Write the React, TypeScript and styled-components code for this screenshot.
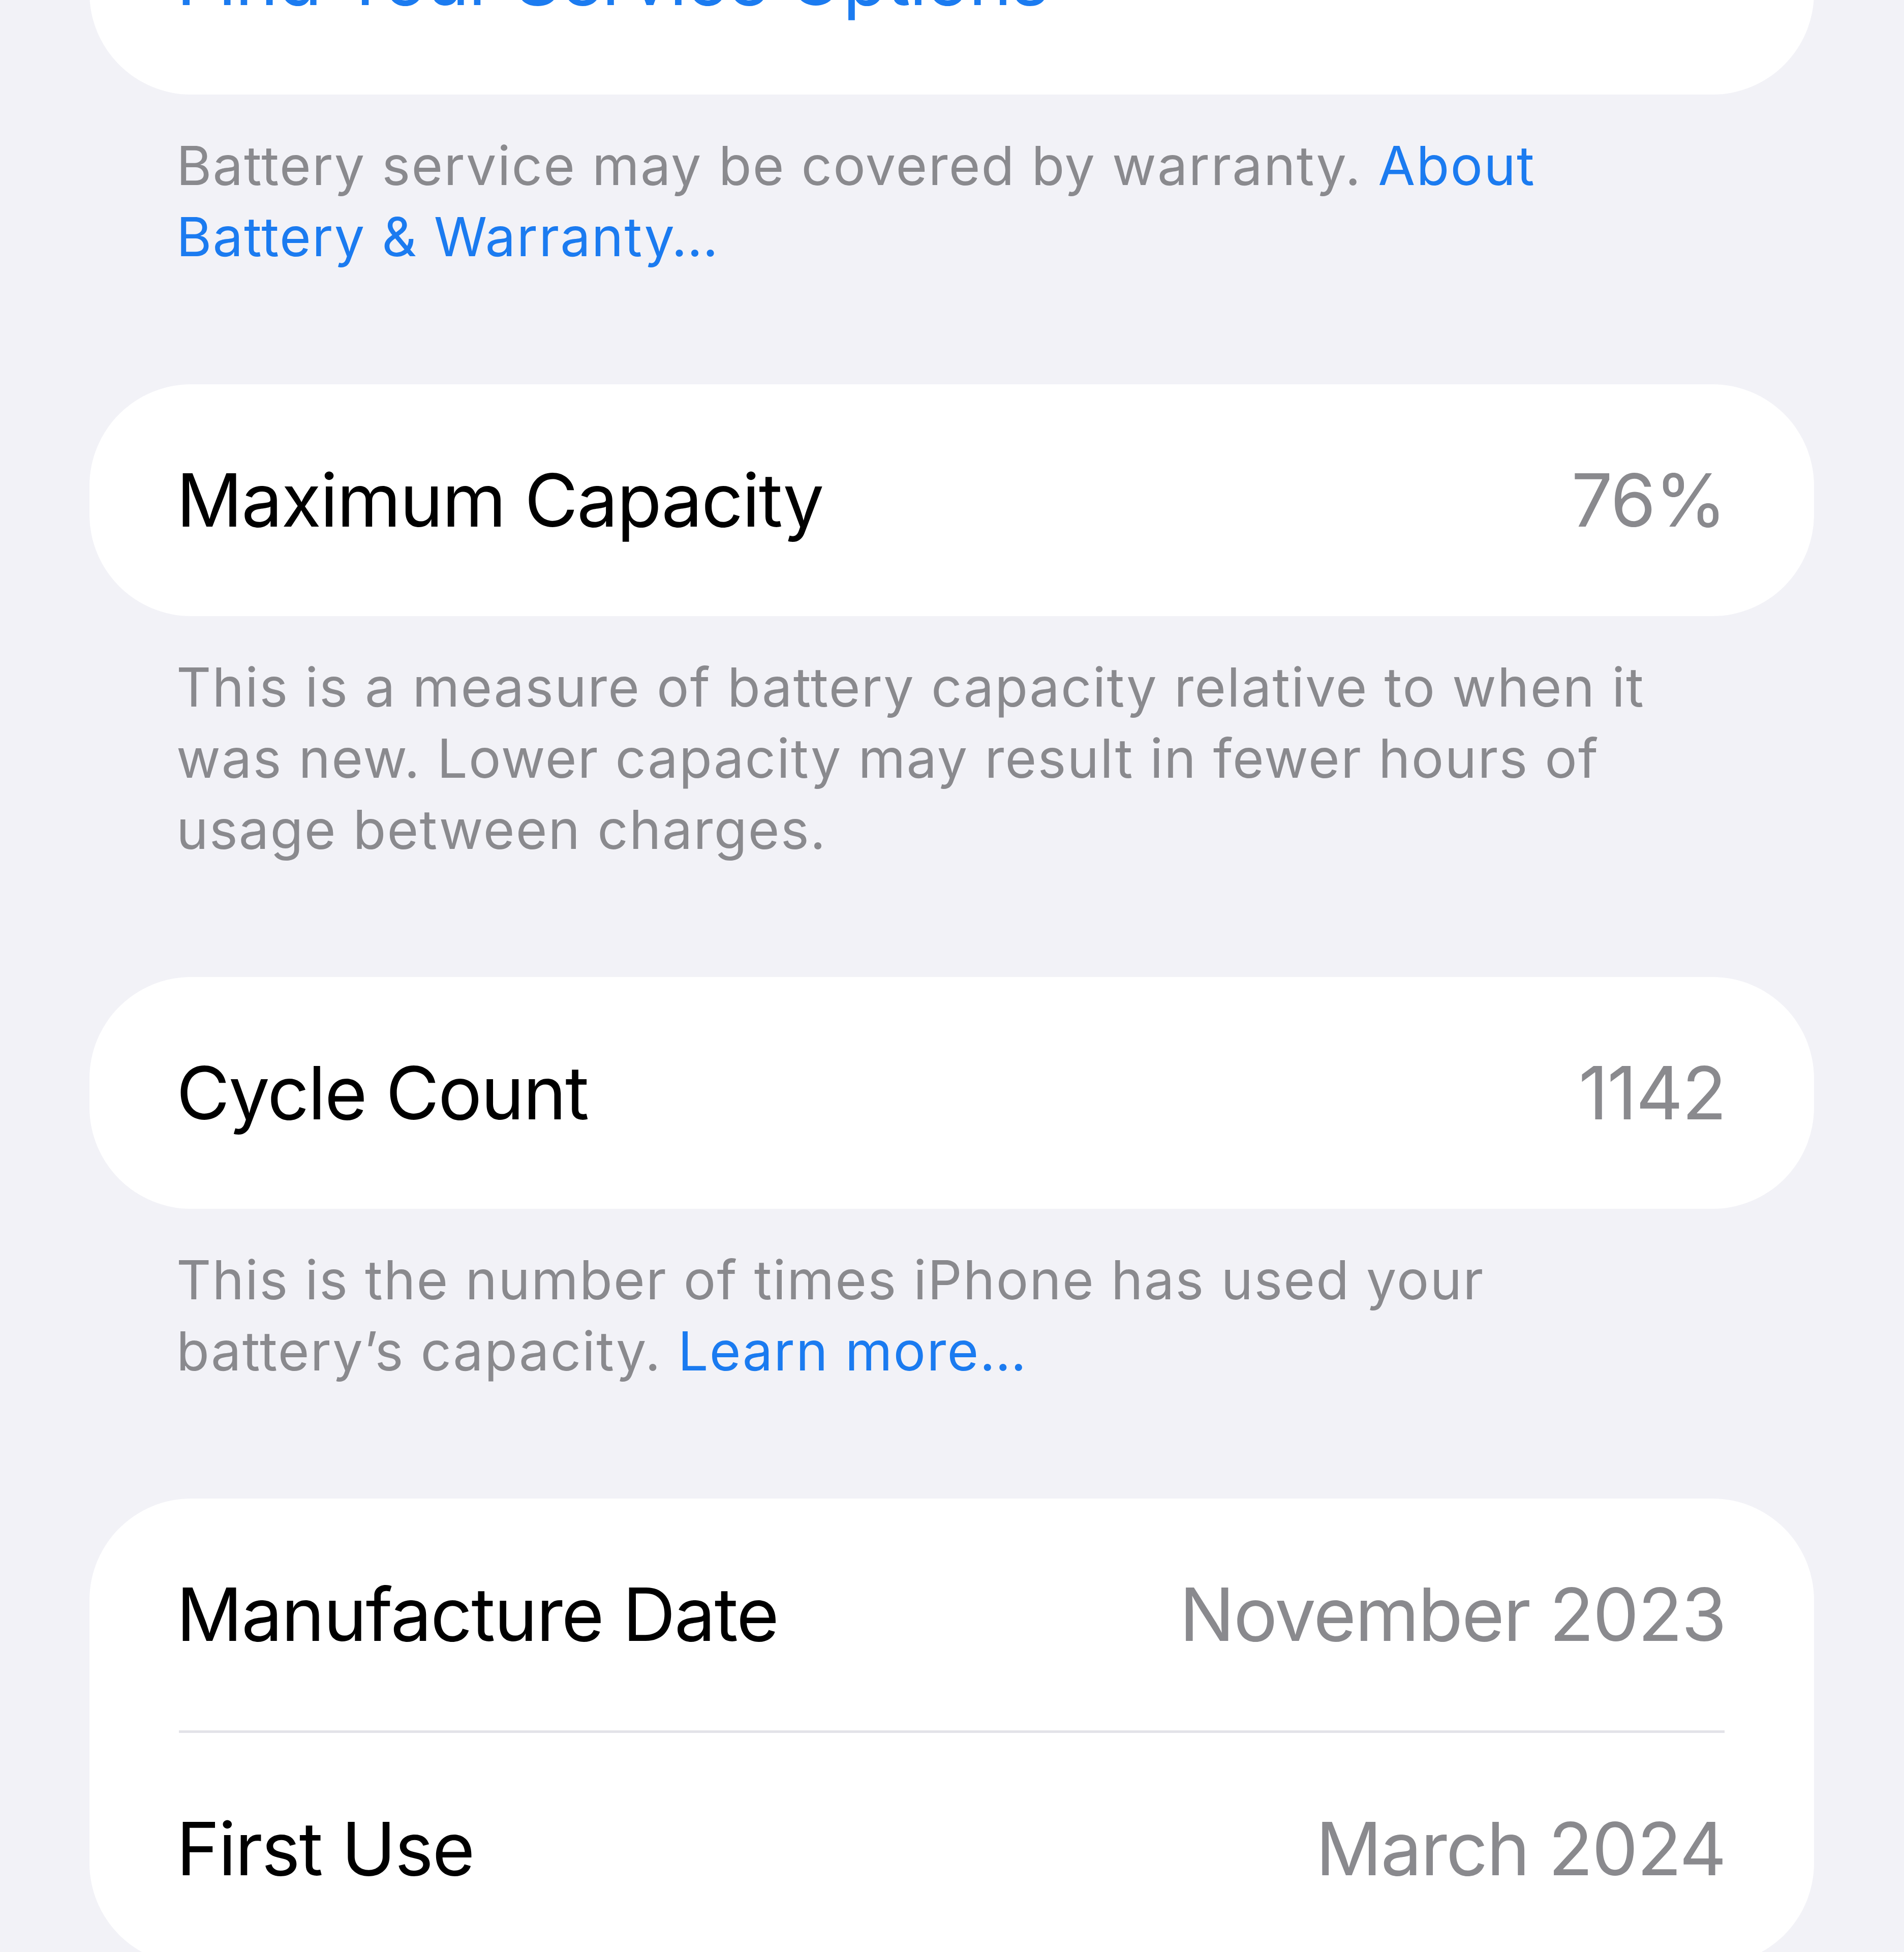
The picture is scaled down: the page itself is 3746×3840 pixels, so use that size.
import styled, { createGlobalStyle } from 'styled-components';

const GlobalStyle = createGlobalStyle`
  html, body {
    margin: 0;
    padding: 0;
    background: #f2f2f7;
  }
  body {
    font-family: Inter, "Noto Sans", "Liberation Sans", sans-serif;
    -webkit-font-smoothing: antialiased;
  }
`;

const Screen = styled.div`
  width: 3746px;
  height: 3840px;
  box-sizing: border-box;
  padding: 0 177px 0 176px;
  overflow: hidden;
  background: #f2f2f7;
`;

// the list is scrolled, so the first group sits partly above the top edge
const List = styled.div`
  display: flex;
  flex-direction: column;
  margin-top: -270px;
`;

const Section = styled.section`
  display: flex;
  flex-direction: column;
  margin-bottom: 220px;
`;

const Card = styled.div`
  background: #ffffff;
  border-radius: 200px;
  overflow: hidden;
`;

const Row = styled.div`
  height: 456px;
  box-sizing: border-box;
  padding: 0 174px 0 171px;
  display: flex;
  align-items: center;
  justify-content: space-between;
  font-size: 144px;
  line-height: 1.2;
  letter-spacing: -0.015em;
`;

const Label = styled.span<{ $link?: boolean }>`
  color: ${({ $link }) => ($link ? '#1b7bf0' : '#000000')};
`;

const Value = styled.span`
  color: #8a8a8e;
`;

const Divider = styled.div`
  height: 5px;
  margin: 0 176px;
  background: #e3e3e8;
`;

const Footer = styled.p`
  margin: 70px 0 0;
  padding: 0 239px 0 171px;
  font-size: 106px;
  line-height: 140px;
  color: #8a8a8e;
  letter-spacing: 0.02em;
`;

const Link = styled.span`
  color: #1b7bf0;
`;

type Info = { label: string; value: string };

const dates: Info[] = [
  { label: 'Manufacture Date', value: 'November 2023' },
  { label: 'First Use', value: 'March 2024' },
];

export default function App() {
  return (
    <>
      <GlobalStyle />
      <Screen>
        <List>
          <Section>
            <Card>
              <Row>
                <Label $link>Find Your Service Options</Label>
              </Row>
            </Card>
            <Footer>
              Battery service may be covered by warranty. <Link>About Battery &amp; Warranty…</Link>
            </Footer>
          </Section>

          <Section>
            <Card>
              <Row>
                <Label>Maximum Capacity</Label>
                <Value>76%</Value>
              </Row>
            </Card>
            <Footer>
              This is a measure of battery capacity relative to when it was new. Lower capacity may
              result in fewer hours of usage between charges.
            </Footer>
          </Section>

          <Section>
            <Card>
              <Row>
                <Label>Cycle Count</Label>
                <Value>1142</Value>
              </Row>
            </Card>
            <Footer>
              This is the number of times iPhone has used your battery’s capacity.{' '}
              <Link>Learn more…</Link>
            </Footer>
          </Section>

          <Section>
            <Card>
              {dates.map((item, i) => (
                <div key={item.label}>
                  {i > 0 && <Divider />}
                  <Row>
                    <Label>{item.label}</Label>
                    <Value>{item.value}</Value>
                  </Row>
                </div>
              ))}
            </Card>
          </Section>
        </List>
      </Screen>
    </>
  );
}
